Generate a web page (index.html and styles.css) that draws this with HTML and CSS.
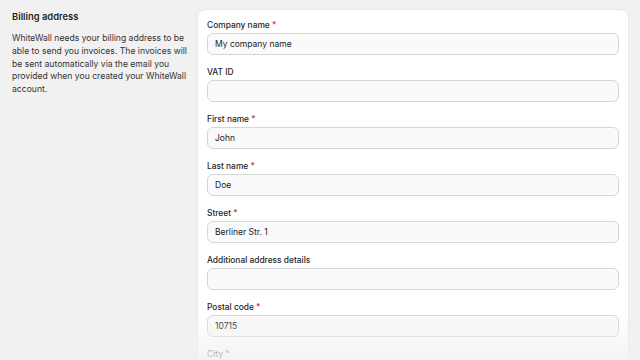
FILE: index.html
```html
<!DOCTYPE html>
<html lang="en">
<head>
<meta charset="utf-8">
<title>Billing address</title>
<link rel="stylesheet" href="styles.css">
</head>
<body>
<div class="page">
  <aside class="intro">
    <h2 class="intro-title">Billing address</h2>
    <p class="intro-text">WhiteWall needs your billing address to be able to send you invoices. The invoices will be sent automatically via the email you provided when you created your WhiteWall account.</p>
  </aside>
  <form class="card">
    <div class="field">
      <label class="label">Company name <span class="req">*</span></label>
      <div class="input">My company name</div>
    </div>
    <div class="field">
      <label class="label">VAT ID</label>
      <div class="input"></div>
    </div>
    <div class="field">
      <label class="label">First name <span class="req">*</span></label>
      <div class="input">John</div>
    </div>
    <div class="field">
      <label class="label">Last name <span class="req">*</span></label>
      <div class="input">Doe</div>
    </div>
    <div class="field">
      <label class="label">Street <span class="req">*</span></label>
      <div class="input">Berliner Str. 1</div>
    </div>
    <div class="field">
      <label class="label">Additional address details</label>
      <div class="input"></div>
    </div>
    <div class="field">
      <label class="label">Postal code <span class="req">*</span></label>
      <div class="input">10715</div>
    </div>
    <div class="field">
      <label class="label">City <span class="req">*</span></label>
      <div class="input"></div>
    </div>
  </form>
</div>
<div class="fade"></div>
</body>
</html>
```
FILE: styles.css
```css
html, body {
  margin: 0;
  padding: 0;
  background: #f1f1f1;
  height: 100%;
  overflow: hidden;
}
body {
  font-family: Inter, "Noto Sans", sans-serif;
  color: #2b2b2b;
}
.page {
  display: flex;
  gap: 9px;
  padding: 9px 11px 0 12px;
}
.intro {
  width: 176px;
  flex: none;
  padding-top: 1px;
}
.intro-title {
  margin: 0;
  font-size: 9.4px;
  line-height: 13px;
  font-weight: 600;
  color: #1f1f1f;
}
.intro-text {
  margin: 9px 0 0;
  font-size: 8.6px;
  line-height: 12.8px;
  color: #333;
}
.card {
  flex: 1;
  background: #fff;
  border: 1px solid #e8e8e8;
  border-radius: 8px;
  padding: 7px 9px 9px 9px;
  display: flex;
  flex-direction: column;
  gap: 9px;
}
.field {
  display: flex;
  flex-direction: column;
}
.label {
  padding-top: 1px;
  font-size: 8.4px;
  line-height: 15px;
  font-weight: 500;
  color: #262626;
}
.req {
  color: #c0392b;
}
.input {
  height: 20px;
  border: 1px solid #d6d6d6;
  border-radius: 6px;
  background: #fafafa;
  padding: 0 7px;
  font-size: 8.5px;
  line-height: 20px;
  color: #222;
}
.fade {
  position: fixed;
  left: 0;
  right: 0;
  bottom: 0;
  height: 45px;
  background: linear-gradient(to bottom, rgba(241,241,241,0), rgba(241,241,241,0.85));
  pointer-events: none;
}
```
